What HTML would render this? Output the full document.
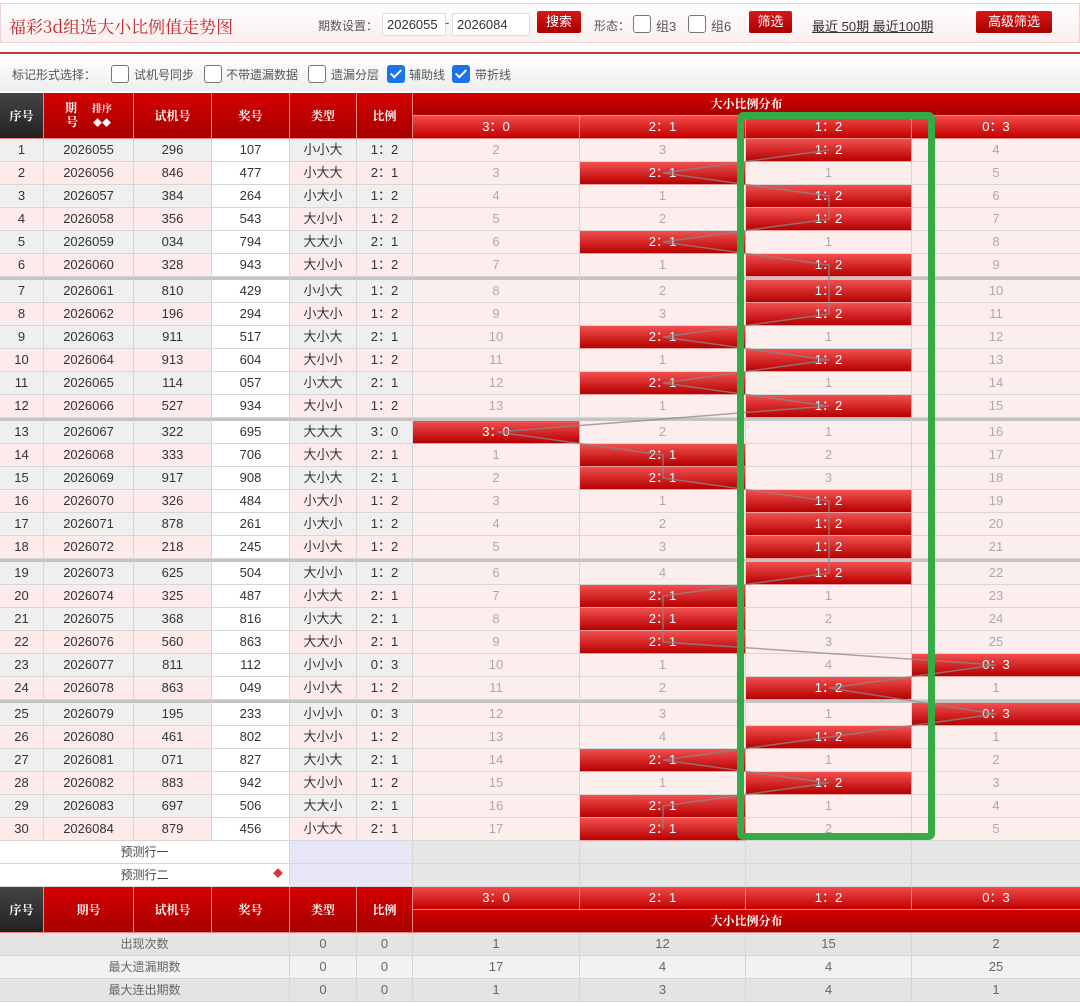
<!DOCTYPE html>
<html><head><meta charset="utf-8">
<style>
*{box-sizing:content-box}
body{margin:0;width:1080px;height:1006px;overflow:hidden;background:#fff;font-family:"Liberation Sans","Noto Sans CJK SC",sans-serif;font-size:13px;color:#333;position:relative}
.top{position:absolute;left:0;top:3px;width:1078px;height:38px;background:linear-gradient(#fff,#fbeeee);border:1px solid #ecd4d4}
.title{position:absolute;left:8px;top:9px;font-size:17px;color:#c0282d;font-family:"Noto Serif CJK SC","Liberation Serif",serif}
.t{position:absolute;font-size:12px;color:#555;top:13px}
.inp{position:absolute;top:9px;height:21px;border:1px solid #ddd;background:#fff;font-size:13px;line-height:21px;padding-left:4px;color:#333}
.btn{position:absolute;top:8px;height:22px;background:linear-gradient(#d81818,#a80000);color:#fff;font-size:13px;line-height:22px;text-align:center;border-radius:2px}
.cb{position:absolute;width:16px;height:16px;border:1px solid #777;border-radius:3px;background:#fff}
.cb.on{background:#1a73e8;border-color:#1a73e8}
.cb.on:after{content:"";position:absolute;left:5px;top:1px;width:4px;height:9px;border:solid #fff;border-width:0 2px 2px 0;transform:rotate(45deg)}
.redline{position:absolute;left:0;top:52px;width:1080px;height:2px;background:#b83a3a}
.opt{position:absolute;left:0;top:55px;width:1080px;height:36px;background:linear-gradient(#fff,#eee)}
.ot{position:absolute;top:11px;font-size:12px;color:#555}
table{position:absolute;left:0;border-collapse:separate;border-spacing:0;table-layout:fixed;width:1080px}
td{height:22px;padding:0;border-right:1px solid #d6d6d6;border-bottom:1px solid #d6d6d6;text-align:center;font-size:13px;white-space:nowrap;overflow:hidden;line-height:22px}
td:last-child{border-right:0}
.hd td{color:#fff;background:linear-gradient(#d40000,#a80000);border-color:#e88;font-weight:bold;font-size:12px;font-family:"Noto Serif CJK SC",serif}
.hd td.dk{background:linear-gradient(#444,#222)}
.hd td.sub{background:linear-gradient(#f24a4a,#c00000);font-weight:normal;font-size:13px;font-family:"Liberation Sans","Noto Sans CJK SC",sans-serif}
tr.o td{background:#efefef}
tr.e td{background:#fdebeb}
tr td.w{background:#fff}
tr td.d{background:#fdeeee;color:#aaa}
tr td.h{background:linear-gradient(#f25050,#b50000);color:#fff;border-color:#e8a0a0}
tr.s td{border-top:3px solid #c4c4c4}
.pr td{background:#fff}
.pr td.lv{background:#e6e6f6}
.pr td.g{background:#e6e6e6}
.st1 td{background:#e4e4e4;color:#666}
.st2 td{background:#f2f2f2;color:#666}
</style></head><body>
<div class="top">
<div class="title">福彩3d组选大小比例值走势图</div>
<div class="t" style="left:317px">期数设置：</div>
<div class="inp" style="left:381px;width:58px">2026055</div>
<div class="t" style="left:444px;top:11px;font-size:13px">-</div>
<div class="inp" style="left:451px;width:72px">2026084</div>
<div class="t" style="left:536px;top:12px;font-size:13px;color:#444">期</div>
<div class="btn" style="left:536px;width:44px;top:7px">搜索</div>
<div class="t" style="left:593px">形态：</div>
<div class="cb" style="left:632px;top:11px"></div>
<div class="t" style="left:655px;font-size:13px;top:12px">组3</div>
<div class="cb" style="left:687px;top:11px"></div>
<div class="t" style="left:710px;font-size:13px;top:12px">组6</div>
<div class="btn" style="left:748px;width:43px;top:7px">筛选</div>
<div class="t" style="left:811px;font-size:13px;top:12px;text-decoration:underline;color:#333">最近 50期 最近100期</div>
<div class="btn" style="left:975px;width:76px;top:7px">高级筛选</div>
</div>
<div class="redline"></div>
<div class="opt">
<div class="ot" style="left:12px">标记形式选择：</div>
<div class="cb" style="left:111px;top:10px"></div><div class="ot" style="left:134px">试机号同步</div>
<div class="cb" style="left:204px;top:10px"></div><div class="ot" style="left:226px">不带遗漏数据</div>
<div class="cb" style="left:308px;top:10px"></div><div class="ot" style="left:331px">遗漏分层</div>
<div class="cb on" style="left:387px;top:10px"></div><div class="ot" style="left:409px">辅助线</div>
<div class="cb on" style="left:452px;top:10px"></div><div class="ot" style="left:475px">带折线</div>
</div>

<table style="top:93px">
<colgroup><col style="width:44px"><col style="width:90px"><col style="width:78px"><col style="width:78px"><col style="width:67px"><col style="width:56px"><col style="width:167px"><col style="width:166px"><col style="width:166px"><col style="width:168px"></colgroup>
<tr class="hd" style="height:23px"><td rowspan="2" class="dk">序号</td><td rowspan="2" style="line-height:14px">期&nbsp;&nbsp;&nbsp;&nbsp;&nbsp;<span style="font-size:10px">排序</span><br>号&nbsp;&nbsp;&nbsp;&nbsp;&nbsp;<span style="font-size:9px">◆◆</span></td><td rowspan="2">试机号</td><td rowspan="2">奖号</td><td rowspan="2">类型</td><td rowspan="2">比例</td><td colspan="4">大小比例分布</td></tr>
<tr class="hd" style="height:23px"><td class="sub">3：0</td><td class="sub">2：1</td><td class="sub">1：2</td><td class="sub">0：3</td></tr>
<tr class="o"><td>1</td><td>2026055</td><td>296</td><td class="w">107</td><td>小小大</td><td>1：2</td><td class="d">2</td><td class="d">3</td><td class="h">1：2</td><td class="d">4</td></tr>
<tr class="e"><td>2</td><td>2026056</td><td>846</td><td class="w">477</td><td>小大大</td><td>2：1</td><td class="d">3</td><td class="h">2：1</td><td class="d">1</td><td class="d">5</td></tr>
<tr class="o"><td>3</td><td>2026057</td><td>384</td><td class="w">264</td><td>小大小</td><td>1：2</td><td class="d">4</td><td class="d">1</td><td class="h">1：2</td><td class="d">6</td></tr>
<tr class="e"><td>4</td><td>2026058</td><td>356</td><td class="w">543</td><td>大小小</td><td>1：2</td><td class="d">5</td><td class="d">2</td><td class="h">1：2</td><td class="d">7</td></tr>
<tr class="o"><td>5</td><td>2026059</td><td>034</td><td class="w">794</td><td>大大小</td><td>2：1</td><td class="d">6</td><td class="h">2：1</td><td class="d">1</td><td class="d">8</td></tr>
<tr class="e"><td>6</td><td>2026060</td><td>328</td><td class="w">943</td><td>大小小</td><td>1：2</td><td class="d">7</td><td class="d">1</td><td class="h">1：2</td><td class="d">9</td></tr>
<tr class="o s"><td>7</td><td>2026061</td><td>810</td><td class="w">429</td><td>小小大</td><td>1：2</td><td class="d">8</td><td class="d">2</td><td class="h">1：2</td><td class="d">10</td></tr>
<tr class="e"><td>8</td><td>2026062</td><td>196</td><td class="w">294</td><td>小大小</td><td>1：2</td><td class="d">9</td><td class="d">3</td><td class="h">1：2</td><td class="d">11</td></tr>
<tr class="o"><td>9</td><td>2026063</td><td>911</td><td class="w">517</td><td>大小大</td><td>2：1</td><td class="d">10</td><td class="h">2：1</td><td class="d">1</td><td class="d">12</td></tr>
<tr class="e"><td>10</td><td>2026064</td><td>913</td><td class="w">604</td><td>大小小</td><td>1：2</td><td class="d">11</td><td class="d">1</td><td class="h">1：2</td><td class="d">13</td></tr>
<tr class="o"><td>11</td><td>2026065</td><td>114</td><td class="w">057</td><td>小大大</td><td>2：1</td><td class="d">12</td><td class="h">2：1</td><td class="d">1</td><td class="d">14</td></tr>
<tr class="e"><td>12</td><td>2026066</td><td>527</td><td class="w">934</td><td>大小小</td><td>1：2</td><td class="d">13</td><td class="d">1</td><td class="h">1：2</td><td class="d">15</td></tr>
<tr class="o s"><td>13</td><td>2026067</td><td>322</td><td class="w">695</td><td>大大大</td><td>3：0</td><td class="h">3：0</td><td class="d">2</td><td class="d">1</td><td class="d">16</td></tr>
<tr class="e"><td>14</td><td>2026068</td><td>333</td><td class="w">706</td><td>大小大</td><td>2：1</td><td class="d">1</td><td class="h">2：1</td><td class="d">2</td><td class="d">17</td></tr>
<tr class="o"><td>15</td><td>2026069</td><td>917</td><td class="w">908</td><td>大小大</td><td>2：1</td><td class="d">2</td><td class="h">2：1</td><td class="d">3</td><td class="d">18</td></tr>
<tr class="e"><td>16</td><td>2026070</td><td>326</td><td class="w">484</td><td>小大小</td><td>1：2</td><td class="d">3</td><td class="d">1</td><td class="h">1：2</td><td class="d">19</td></tr>
<tr class="o"><td>17</td><td>2026071</td><td>878</td><td class="w">261</td><td>小大小</td><td>1：2</td><td class="d">4</td><td class="d">2</td><td class="h">1：2</td><td class="d">20</td></tr>
<tr class="e"><td>18</td><td>2026072</td><td>218</td><td class="w">245</td><td>小小大</td><td>1：2</td><td class="d">5</td><td class="d">3</td><td class="h">1：2</td><td class="d">21</td></tr>
<tr class="o s"><td>19</td><td>2026073</td><td>625</td><td class="w">504</td><td>大小小</td><td>1：2</td><td class="d">6</td><td class="d">4</td><td class="h">1：2</td><td class="d">22</td></tr>
<tr class="e"><td>20</td><td>2026074</td><td>325</td><td class="w">487</td><td>小大大</td><td>2：1</td><td class="d">7</td><td class="h">2：1</td><td class="d">1</td><td class="d">23</td></tr>
<tr class="o"><td>21</td><td>2026075</td><td>368</td><td class="w">816</td><td>小大大</td><td>2：1</td><td class="d">8</td><td class="h">2：1</td><td class="d">2</td><td class="d">24</td></tr>
<tr class="e"><td>22</td><td>2026076</td><td>560</td><td class="w">863</td><td>大大小</td><td>2：1</td><td class="d">9</td><td class="h">2：1</td><td class="d">3</td><td class="d">25</td></tr>
<tr class="o"><td>23</td><td>2026077</td><td>811</td><td class="w">112</td><td>小小小</td><td>0：3</td><td class="d">10</td><td class="d">1</td><td class="d">4</td><td class="h">0：3</td></tr>
<tr class="e"><td>24</td><td>2026078</td><td>863</td><td class="w">049</td><td>小小大</td><td>1：2</td><td class="d">11</td><td class="d">2</td><td class="h">1：2</td><td class="d">1</td></tr>
<tr class="o s"><td>25</td><td>2026079</td><td>195</td><td class="w">233</td><td>小小小</td><td>0：3</td><td class="d">12</td><td class="d">3</td><td class="d">1</td><td class="h">0：3</td></tr>
<tr class="e"><td>26</td><td>2026080</td><td>461</td><td class="w">802</td><td>大小小</td><td>1：2</td><td class="d">13</td><td class="d">4</td><td class="h">1：2</td><td class="d">1</td></tr>
<tr class="o"><td>27</td><td>2026081</td><td>071</td><td class="w">827</td><td>大小大</td><td>2：1</td><td class="d">14</td><td class="h">2：1</td><td class="d">1</td><td class="d">2</td></tr>
<tr class="e"><td>28</td><td>2026082</td><td>883</td><td class="w">942</td><td>大小小</td><td>1：2</td><td class="d">15</td><td class="d">1</td><td class="h">1：2</td><td class="d">3</td></tr>
<tr class="o"><td>29</td><td>2026083</td><td>697</td><td class="w">506</td><td>大大小</td><td>2：1</td><td class="d">16</td><td class="h">2：1</td><td class="d">1</td><td class="d">4</td></tr>
<tr class="e"><td>30</td><td>2026084</td><td>879</td><td class="w">456</td><td>小大大</td><td>2：1</td><td class="d">17</td><td class="h">2：1</td><td class="d">2</td><td class="d">5</td></tr>
<tr class="pr"><td colspan="4" style="color:#444;font-size:12px">预测行一</td><td colspan="2" class="lv"></td><td class="g"></td><td class="g"></td><td class="g"></td><td class="g"></td></tr>
<tr class="pr"><td colspan="4" style="color:#444;font-size:12px;position:relative">预测行二<span style="position:absolute;right:6px;top:0;color:#d33;font-size:10px">◆</span></td><td colspan="2" class="lv"></td><td class="g"></td><td class="g"></td><td class="g"></td><td class="g"></td></tr>
<tr class="hd" style="height:23px"><td rowspan="2" class="dk">序号</td><td rowspan="2">期号</td><td rowspan="2">试机号</td><td rowspan="2">奖号</td><td rowspan="2">类型</td><td rowspan="2">比例</td><td class="sub">3：0</td><td class="sub">2：1</td><td class="sub">1：2</td><td class="sub">0：3</td></tr>
<tr class="hd" style="height:23px"><td colspan="4">大小比例分布</td></tr>
<tr class="st1"><td colspan="4" style="font-size:12px">出现次数</td><td>0</td><td>0</td><td>1</td><td>12</td><td>15</td><td>2</td></tr>
<tr class="st2"><td colspan="4" style="font-size:12px">最大遗漏期数</td><td>0</td><td>0</td><td>17</td><td>4</td><td>4</td><td>25</td></tr>
<tr class="st1"><td colspan="4" style="font-size:12px">最大连出期数</td><td>0</td><td>0</td><td>1</td><td>3</td><td>4</td><td>1</td></tr>
</table>

<svg width="1080" height="1006" style="position:absolute;left:0;top:0;pointer-events:none">
<polyline fill="none" stroke="#8a8a8a" stroke-opacity="0.75" stroke-width="1.5" points="829,150 663,173 829,196 829,219 663,242 829,265 829,291 829,314 663,337 829,360 663,383 829,406 497,432 663,455 663,478 829,501 829,524 829,547 829,573 663,596 663,619 663,642 996,665 829,688 996,714 829,737 663,760 829,783 663,806 663,829"/>
<rect x="740.5" y="115.5" width="191" height="721" rx="3" fill="none" stroke="#34ab44" stroke-width="7"/>
</svg>
</body></html>
